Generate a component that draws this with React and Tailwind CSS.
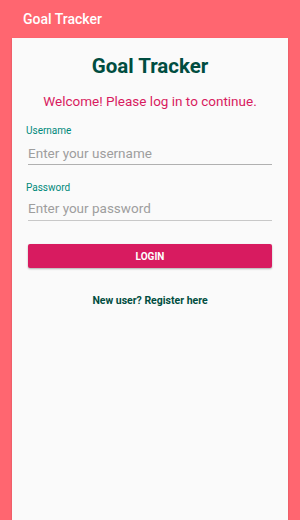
import React from 'react';

export default function App() {
  return (
    <div className="h-[520px] bg-[#ff6670] flex flex-col font-['Roboto',sans-serif] overflow-hidden">
      {/* Top bar */}
      <div className="h-[38px] flex items-center px-[23px]">
        <span className="text-white text-[14px] font-medium">Goal Tracker</span>
      </div>

      {/* Card */}
      <div className="flex-1 mx-3 bg-[#fafafa] shadow-[0_1px_2px_rgba(0,0,0,0.2)] px-4 pt-[14px]">
        <h1 className="text-center text-[20.5px] font-bold text-[#004d40] leading-[28px]">Goal Tracker</h1>
        <p className="text-center text-[13.5px] text-[#d81b60] mt-[11px] leading-[20px]">
          Welcome! Please log in to continue.
        </p>

        <div className="mt-[13px]">
          <label className="block text-[10px] text-[#00897b] leading-[14px] -ml-[2px]">Username</label>
          <input
            type="text"
            placeholder="Enter your username"
            className="block w-full mt-[6px] pb-[1px] bg-transparent border-b border-[#b0b0b0] text-[13.5px] leading-[19px] outline-none placeholder:text-[#9e9e9e]"
          />

          <label className="block text-[10px] text-[#00897b] leading-[14px] -ml-[2px] mt-[16px]">Password</label>
          <input
            type="password"
            placeholder="Enter your password"
            className="block w-full mt-[4px] pb-[2px] bg-transparent border-b border-[#c8c8c8] text-[13.5px] leading-[19px] outline-none placeholder:text-[#9e9e9e]"
          />

          <button className="block w-full h-[24px] mt-[23px] bg-[#d81b60] text-white text-[10px] font-bold shadow-[0_1px_2px_rgba(0,0,0,0.3)] rounded-[2px]">
            LOGIN
          </button>

          <p className="text-center text-[10.5px] font-bold text-[#004d40] mt-[25px] leading-[16px]">New user? Register here</p>
        </div>
      </div>
    </div>
  );
}
